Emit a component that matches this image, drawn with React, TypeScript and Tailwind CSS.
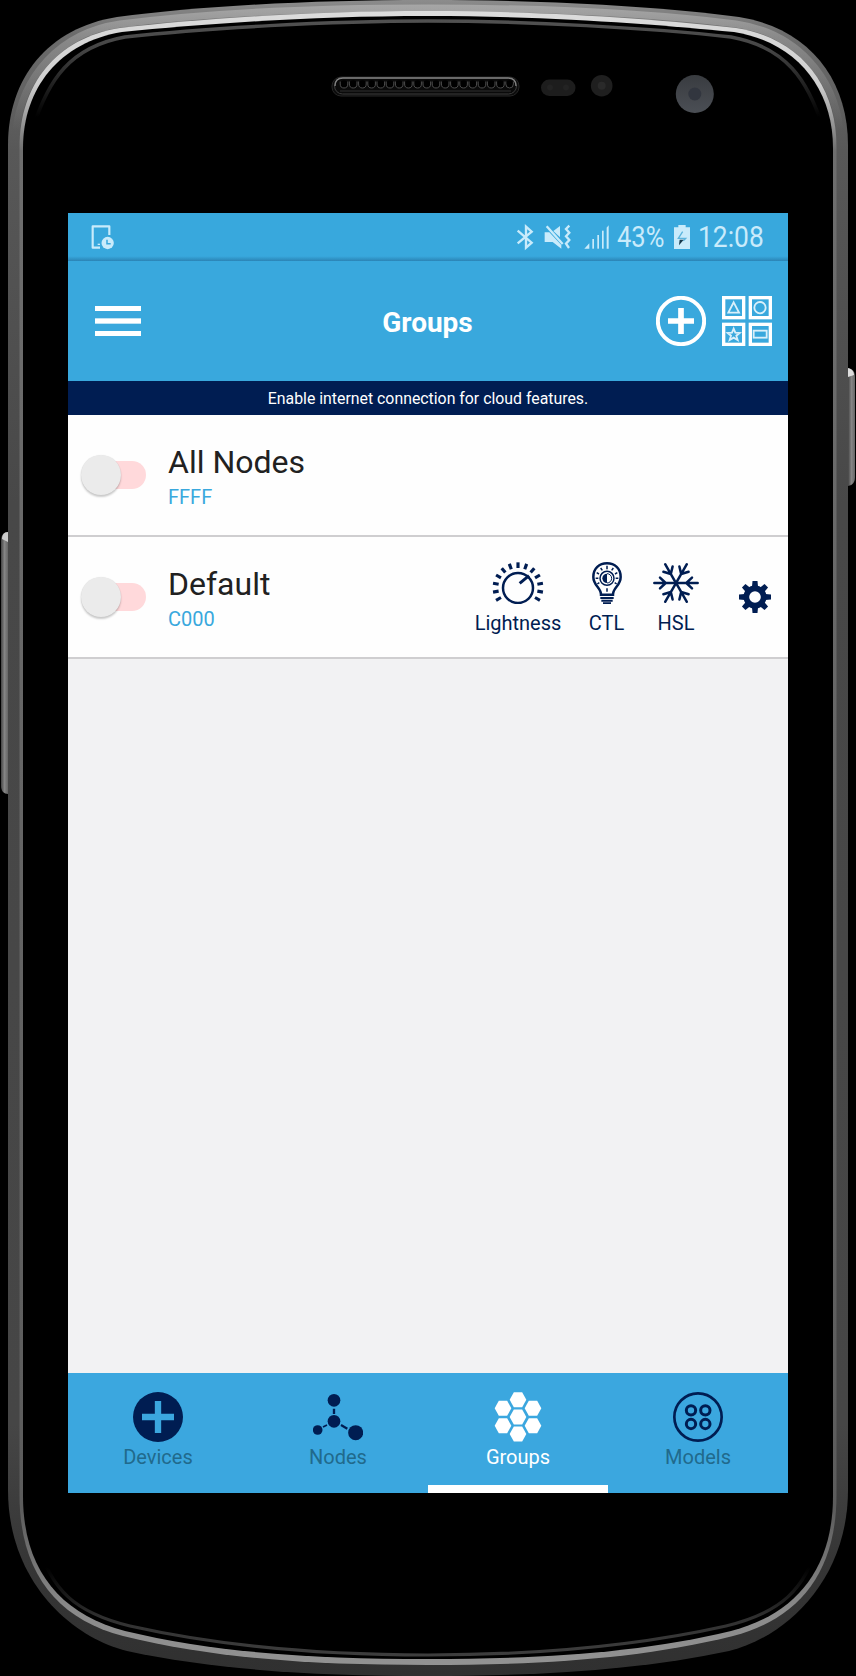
import React from 'react';

const NAVY = '#001d52';

const TICKS = [-120, -100, -80, -60, -40, -20, 0, 20, 40, 60, 80, 100, 120];

function PhoneFrame() {
  const outer =
    'M8 145 C8 78 48 28 117 17 C200 6 310 0 428 0 C546 0 656 6 739 17 C808 28 848 78 848 145 V1490 C848 1580 786 1637 729 1651 C640 1670 540 1676 428 1676 C316 1676 216 1670 127 1651 C70 1637 8 1580 8 1490 Z';
  const bright =
    'M19.5 147 C19.5 85 56 38 120 28 C200 19 310 11 428 11 C546 11 656 19 736 28 C800 38 836.5 85 836.5 147 V1495 C836.5 1572 799 1619 733 1636 C640 1659 540 1665 428 1665 C316 1665 216 1659 123 1636 C57 1619 19.5 1572 19.5 1495 Z';
  const inner =
    'M23 148 C23 88 60 42 122 32 C202 24 310 16 428 16 C546 16 654 24 734 32 C796 42 833 88 833 148 V1496 C833 1569 796 1614 731 1631 C640 1653 540 1659 428 1659 C316 1659 216 1653 125 1631 C60 1614 23 1569 23 1496 Z';
  const holes = Array.from({ length: 19 }, (_, i) => 344 + i * 9.2);
  return (
    <svg className="absolute inset-0" width="856" height="1676" viewBox="0 0 856 1676">
      <defs>
        <linearGradient id="shell" x1="0" y1="0" x2="0" y2="1676" gradientUnits="userSpaceOnUse">
          <stop offset="0" stopColor="#8c8c8c" />
          <stop offset="0.02" stopColor="#6c6c6c" />
          <stop offset="0.09" stopColor="#585858" />
          <stop offset="0.3" stopColor="#484848" />
          <stop offset="0.85" stopColor="#464646" />
          <stop offset="0.93" stopColor="#363636" />
          <stop offset="1" stopColor="#303030" />
        </linearGradient>
        <linearGradient id="glow" x1="0" y1="0" x2="0" y2="130" gradientUnits="userSpaceOnUse">
          <stop offset="0" stopColor="#b4b4b4" stopOpacity="0.75" />
          <stop offset="0.3" stopColor="#a6a6a6" stopOpacity="0.5" />
          <stop offset="1" stopColor="#a6a6a6" stopOpacity="0" />
        </linearGradient>
        <linearGradient id="shine" x1="0" y1="0" x2="0" y2="1676" gradientUnits="userSpaceOnUse">
          <stop offset="0" stopColor="#dedede" />
          <stop offset="0.05" stopColor="#cfcfcf" />
          <stop offset="0.09" stopColor="#6e6e6e" />
          <stop offset="0.9" stopColor="#5c5c5c" />
          <stop offset="0.96" stopColor="#8a8a8a" />
          <stop offset="1" stopColor="#949494" />
        </linearGradient>
        <linearGradient id="rim" x1="0" y1="0" x2="0" y2="1676" gradientUnits="userSpaceOnUse">
          <stop offset="0" stopColor="#5a5a5a" />
          <stop offset="0.03" stopColor="#444" />
          <stop offset="0.07" stopColor="#000" />
          <stop offset="0.935" stopColor="#000" />
          <stop offset="0.965" stopColor="#303030" />
          <stop offset="1" stopColor="#454545" />
        </linearGradient>
        <linearGradient id="key" x1="0" y1="0" x2="1" y2="0">
          <stop offset="0" stopColor="#444" />
          <stop offset="0.5" stopColor="#858585" />
          <stop offset="1" stopColor="#666" />
        </linearGradient>
        <linearGradient id="lens" x1="0" y1="0" x2="0" y2="1">
          <stop offset="0" stopColor="#393c40" />
          <stop offset="1" stopColor="#4b4f55" />
        </linearGradient>
      </defs>
      <path d="M8 532 C3 532 1 536 1 541 V786 C1 791 4 794 8 794 Z" fill="url(#key)" />
      <path d="M8 532 C4 532 2 535 2 539 L8 542 Z" fill="#ccc" />
      <path d="M848 368 C853 369 855 372 855 377 V477 C855 482 853 485 848 486 Z" fill="url(#key)" />
      <path d="M848 368 C852 369 854 372 854 375 L848 377 Z" fill="#ddd" />
      <path d={outer} fill="url(#shell)" />
      <path
        d="M16 130 C22 78 58 33 120 24 C200 14 310 8 428 8 C546 8 656 14 736 24 C798 33 834 78 840 130"
        fill="none"
        stroke="url(#glow)"
        strokeWidth="7"
      />
      <path d={bright} fill="url(#shine)" />
      <path d={inner} fill="#000" />
      <path
        d="M33 128 C48 80 70 47 125 37 C205 28 330 21 428 21 C526 21 651 28 731 37 C786 47 808 80 823 128"
        fill="none"
        stroke="url(#rim)"
        strokeWidth="3.5"
      />
      <path
        d="M37 1540 C50 1590 76 1613 130 1626 C215 1645 320 1655 428 1655 C536 1655 641 1645 726 1626 C780 1613 806 1590 819 1540"
        fill="none"
        stroke="url(#rim)"
        strokeWidth="3.2"
      />
      <rect x="332" y="77" width="187" height="19" rx="9" fill="#0c0c0c" stroke="#262626" />
      <rect x="334.5" y="78" width="182" height="16" rx="8" fill="#0a0a0a" stroke="#3c3c3c" />
      <path d="M335 86 Q335 78 343 78 H508 Q516 78 516 86" fill="none" stroke="#808080" strokeWidth="1.4" />
      <path d="M340 91 H511" stroke="#303030" />
      {holes.map((x) => (
        <g key={x}>
          <circle cx={x} cy="84" r="3.8" fill="#000" />
          <path d={`M${x - 3.8} 81.5 V84 a3.8 4 0 0 0 7.6 0 V81.5`} fill="none" stroke="#4c4c4c" />
        </g>
      ))}
      <rect x="541" y="79.5" width="34.5" height="16.5" rx="8.25" fill="#1d1d1d" />
      <circle cx="550" cy="87.5" r="3" fill="#232323" />
      <circle cx="566" cy="87.5" r="3" fill="#232323" />
      <circle cx="601.7" cy="85.7" r="10.8" fill="#1f1f1f" />
      <circle cx="601.7" cy="85.7" r="4" fill="#2a2a2a" />
      <circle cx="694.8" cy="94" r="19" fill="url(#lens)" />
      <circle cx="694.8" cy="94" r="6.5" fill="#32363f" />
    </svg>
  );
}

function StatusBar() {
  return (
    <div className="flex h-12 items-center bg-linear-to-b from-[#38a8dd] from-90% to-[#2b84b5] pr-[22px] pl-[22px] text-[#c9ebfb]">
      <svg width="26" height="28" viewBox="90 54 78 84" fill="none" stroke="currentColor">
        <path d="M148 90 V64 H98 V128 H120" strokeWidth="6.5" strokeLinejoin="round" />
        <path d="M113 118 H120" strokeWidth="4" />
        <circle cx="143" cy="114" r="18.5" fill="currentColor" stroke="none" />
        <path d="M141 104 V116 H152" stroke="#38a8dd" strokeWidth="4.5" />
      </svg>
      <div className="flex-1" />
      <svg width="18" height="28" viewBox="290 54 54 84" fill="none" stroke="currentColor" strokeWidth="7">
        <path d="M295 77 L337 113 L320 128 V65 L337 80 L295 115" />
      </svg>
      <svg className="ml-2.5" width="28" height="28" viewBox="372 54 84 84" fill="currentColor">
        <path d="M374 82 H388 L424 120 V131 L398 111 H374 Z" />
        <path d="M400 78 L420 63 V97 Z" />
        <path d="M380 64 L428 117" stroke="currentColor" strokeWidth="7" />
        <path
          d="M448 62 L438 72 L448 83 L438 94 L448 105 L438 116 L447 129"
          fill="none"
          stroke="currentColor"
          strokeWidth="7"
        />
      </svg>
      <svg className="ml-3" width="26" height="28" viewBox="490 54 78 84" fill="currentColor">
        <path d="M491 131 L506 115 V131 Z" />
        <rect x="515" y="102" width="5" height="29" />
        <rect x="530" y="90" width="5" height="41" />
        <rect x="544" y="77" width="5" height="54" />
        <path d="M558 68 L564 61 V131 H558 Z" />
      </svg>
      <span className="ml-[7px] w-[50px] origin-left scale-x-[0.85] font-[Roboto] text-[30px] leading-9 whitespace-nowrap">
        43%
      </span>
      <svg className="ml-1.5" width="18" height="28" viewBox="759 54 54 84" fill="currentColor">
        <path d="M762 67 H775 V60 H797 V67 H810 V132 H762 Z" />
        <path d="M788 80 L775 100 H797 L790 107" stroke="#5cb4dd" strokeWidth="4" fill="none" />
        <path d="M779 104 H791 L777 121 Z" fill="#17384b" />
      </svg>
      <span className="ml-[7px] w-[68px] origin-left scale-x-[0.88] font-[Roboto] text-[30px] leading-9 whitespace-nowrap">
        12:08
      </span>
    </div>
  );
}

function Header() {
  return (
    <header className="grid h-[120px] grid-cols-[1fr_auto_1fr] items-center bg-[#39a8dd] pr-4 pl-[27px] text-white">
      <svg width="46" height="30" viewBox="0 0 138 90" fill="currentColor">
        <rect width="138" height="15" />
        <rect y="37" width="138" height="16" />
        <rect y="75" width="138" height="15" />
      </svg>
      <h1 className="mt-1 -ml-3 text-[28px] leading-8 font-bold">Groups</h1>
      <div className="flex justify-end gap-4">
        <svg width="50" height="50" viewBox="708 273 150 150" fill="none" stroke="currentColor">
          <circle cx="783" cy="348" r="69.5" strokeWidth="12" />
          <path d="M783 309 V387 M744 348 H822" strokeWidth="17" />
        </svg>
        <svg width="50" height="50" viewBox="906 273 150 150" fill="none" stroke="currentColor">
          <g strokeWidth="10">
            <rect x="911" y="278" width="60" height="60" />
            <rect x="991" y="278" width="60" height="60" />
            <rect x="911" y="358" width="60" height="60" />
            <rect x="991" y="358" width="60" height="60" />
          </g>
          <g strokeWidth="5.5" stroke="#d9effa">
            <path d="M941 292 L957 323 H925 Z" />
            <circle cx="1020" cy="308" r="17" />
            <path d="M941 371 L946 383 L959 384 L949 392 L953 405 L941 398 L929 405 L933 392 L923 384 L936 383 Z" />
            <rect x="1001" y="377" width="39" height="21" />
          </g>
        </svg>
      </div>
    </header>
  );
}

function Toggle() {
  return (
    <div className="flex w-[67px] items-center">
      <div className="z-10 ml-px size-10 shrink-0 rounded-full bg-[#ebebeb] shadow-[0_2px_2px_rgba(0,0,0,0.2),0_0_1px_rgba(0,0,0,0.12)]" />
      <div className="-ml-5 h-7 w-[45px] rounded-r-full bg-[#ffd9db]" />
    </div>
  );
}

function GroupRow({ name, code, children }: { name: string; code: string; children?: React.ReactNode }) {
  return (
    <div className="flex h-[122px] border-b-2 border-[#cfced0] bg-[#fefefe] pl-3">
      <div className="flex">
        <Toggle />
      </div>
      <div className="ml-[21px] flex-1 pt-7">
        <div className="text-[32px] leading-[38px] text-[#212121]">{name}</div>
        <div className="mt-1 text-[20px] leading-6 text-[#39a8dd]">{code}</div>
      </div>
      {children}
    </div>
  );
}

function Action({ label, width, children }: { label: string; width: string; children: React.ReactNode }) {
  return (
    <div className={`flex flex-col items-center pt-[25px] ${width}`}>
      {children}
      <span className="mt-[7px] text-[20px] leading-6 text-[#001d52]">{label}</span>
    </div>
  );
}

function KnobIcon() {
  return (
    <svg width="52" height="42" viewBox="96 65 156 126" fill="none" stroke={NAVY}>
      <circle cx="174" cy="143" r="45" strokeWidth="7.5" />
      <path d="M179 129 L207 106" strokeWidth="9" />
      {TICKS.map((a) => (
        <path key={a} d="M174 66 V83" strokeWidth="9.5" transform={`rotate(${a} 174 142)`} />
      ))}
    </svg>
  );
}

function BulbIcon() {
  return (
    <svg width="32" height="42" viewBox="394 65 96 126" fill="none" stroke={NAVY} strokeWidth="7.5">
      <path d="M424 163 C424 142 401 136 401 110 C401 84 419 69 442 69 C465 69 483 84 483 110 C483 136 460 142 460 163 Z" />
      <circle cx="442" cy="114" r="21" strokeWidth="4.5" />
      <path d="M442 100 A14 14 0 0 0 442 128 Z" fill={NAVY} stroke="none" />
      <path d="M442 100 A14 14 0 0 1 442 128" strokeWidth="3" />
      <g strokeWidth="4.5">
        <path d="M442 76 V87 M442 144 V154 M408 114 H416 M468 114 H476 M423 83 L428 90 M461 83 L456 90 M411 97 L418 101 M473 97 L466 101 M413 131 L419 127 M471 131 L465 127" />
      </g>
      <path d="M422 173 H462 M425 181 H459 M430 189 H454" strokeWidth="6" />
    </svg>
  );
}

function SnowIcon() {
  return (
    <svg width="48" height="42" viewBox="579 65 144 126" fill="none" stroke={NAVY} strokeWidth="7.5">
      {[0, 60, 120, 180, 240, 300].map((a) => (
        <path
          key={a}
          d="M651 128 H716 M682 128 L699 112 M682 128 L699 144"
          strokeLinecap="round"
          transform={`rotate(${a} 651 128)`}
        />
      ))}
    </svg>
  );
}

function GearIcon() {
  return (
    <svg className="mt-[44px] mr-[17px] ml-[38px]" width="32" height="32" viewBox="-48 -48 96 96">
      <circle r="26" fill="none" stroke={NAVY} strokeWidth="17" />
      {[0, 45, 90, 135, 180, 225, 270, 315].map((a) => (
        <path key={a} d="M-9 -31 L-7.5 -48 H7.5 L9 -31 Z" fill={NAVY} transform={`rotate(${a})`} />
      ))}
    </svg>
  );
}

function Tab({ label, viewBox, active, children }: { label: string; viewBox: string; active?: boolean; children: React.ReactNode }) {
  return (
    <div className="flex flex-1 flex-col items-center pt-[19px]">
      <svg width="50" height="50" viewBox={viewBox}>
        {children}
      </svg>
      <span className={`mt-[3px] text-[20px] leading-6 ${active ? 'text-white' : 'text-[#216a8c]'}`}>{label}</span>
      {active && <div className="mt-auto h-2 w-full bg-white" />}
    </div>
  );
}

const HEXES = [
  [279, 119],
  [234, 145],
  [324, 145],
  [279, 171],
  [234, 197],
  [324, 197],
  [279, 222],
];

function TabBar() {
  return (
    <nav className="flex h-[120px] bg-[#3ba7df]">
      <Tab label="Devices" viewBox="219 96 150 150">
        <circle cx="294" cy="171" r="75" fill={NAVY} />
        <path d="M294 123 V219 M246 171 H342" stroke="#3ba7df" strokeWidth="19" />
      </Tab>
      <Tab label="Nodes" viewBox="759 96 150 150">
        <g fill={NAVY}>
          <circle cx="822" cy="121" r="19" />
          <circle cx="822" cy="184" r="19" />
          <circle cx="773" cy="210" r="14.5" />
          <circle cx="887" cy="218" r="22.5" />
        </g>
        <path d="M822 146 V162 M843 195 L862 206" stroke={NAVY} strokeWidth="7" />
        <path d="M801 195 L789 201" stroke={NAVY} strokeWidth="5" />
      </Tab>
      <Tab label="Groups" viewBox="204 96 150 150" active>
        {HEXES.map(([x, y]) => (
          <path key={`${x}-${y}`} d="M-25 0 L-12.5 -22.5 H12.5 L25 0 L12.5 22.5 H-12.5 Z" fill="#fff" transform={`translate(${x} ${y})`} />
        ))}
      </Tab>
      <Tab label="Models" viewBox="744 96 150 150">
        <g fill="none" stroke={NAVY}>
          <circle cx="819" cy="171" r="71" strokeWidth="8" />
          <g strokeWidth="9">
            <circle cx="798" cy="151" r="14" />
            <circle cx="841" cy="151" r="14" />
            <circle cx="798" cy="192" r="14" />
            <circle cx="841" cy="192" r="14" />
          </g>
        </g>
      </Tab>
    </nav>
  );
}

export default function App() {
  return (
    <div className="relative h-[1676px] w-[856px] overflow-hidden bg-black pt-[213px] pl-[68px] font-[Roboto,sans-serif]">
      <PhoneFrame />
      <main className="relative flex h-[1280px] w-[720px] flex-col bg-[#f2f2f3]">
        <StatusBar />
        <Header />
        <div className="h-[34px] bg-[#001d52] text-center text-[15.85px] leading-[35px] text-white">
          Enable internet connection for cloud features.
        </div>
        <GroupRow name="All Nodes" code="FFFF" />
        <GroupRow name="Default" code="C000">
          <Action label="Lightness" width="w-[88px]">
            <KnobIcon />
          </Action>
          <Action label="CTL" width="w-[89px]">
            <BulbIcon />
          </Action>
          <Action label="HSL" width="w-[50px]">
            <SnowIcon />
          </Action>
          <GearIcon />
        </GroupRow>
        <div className="flex-1" />
        <TabBar />
      </main>
    </div>
  );
}
